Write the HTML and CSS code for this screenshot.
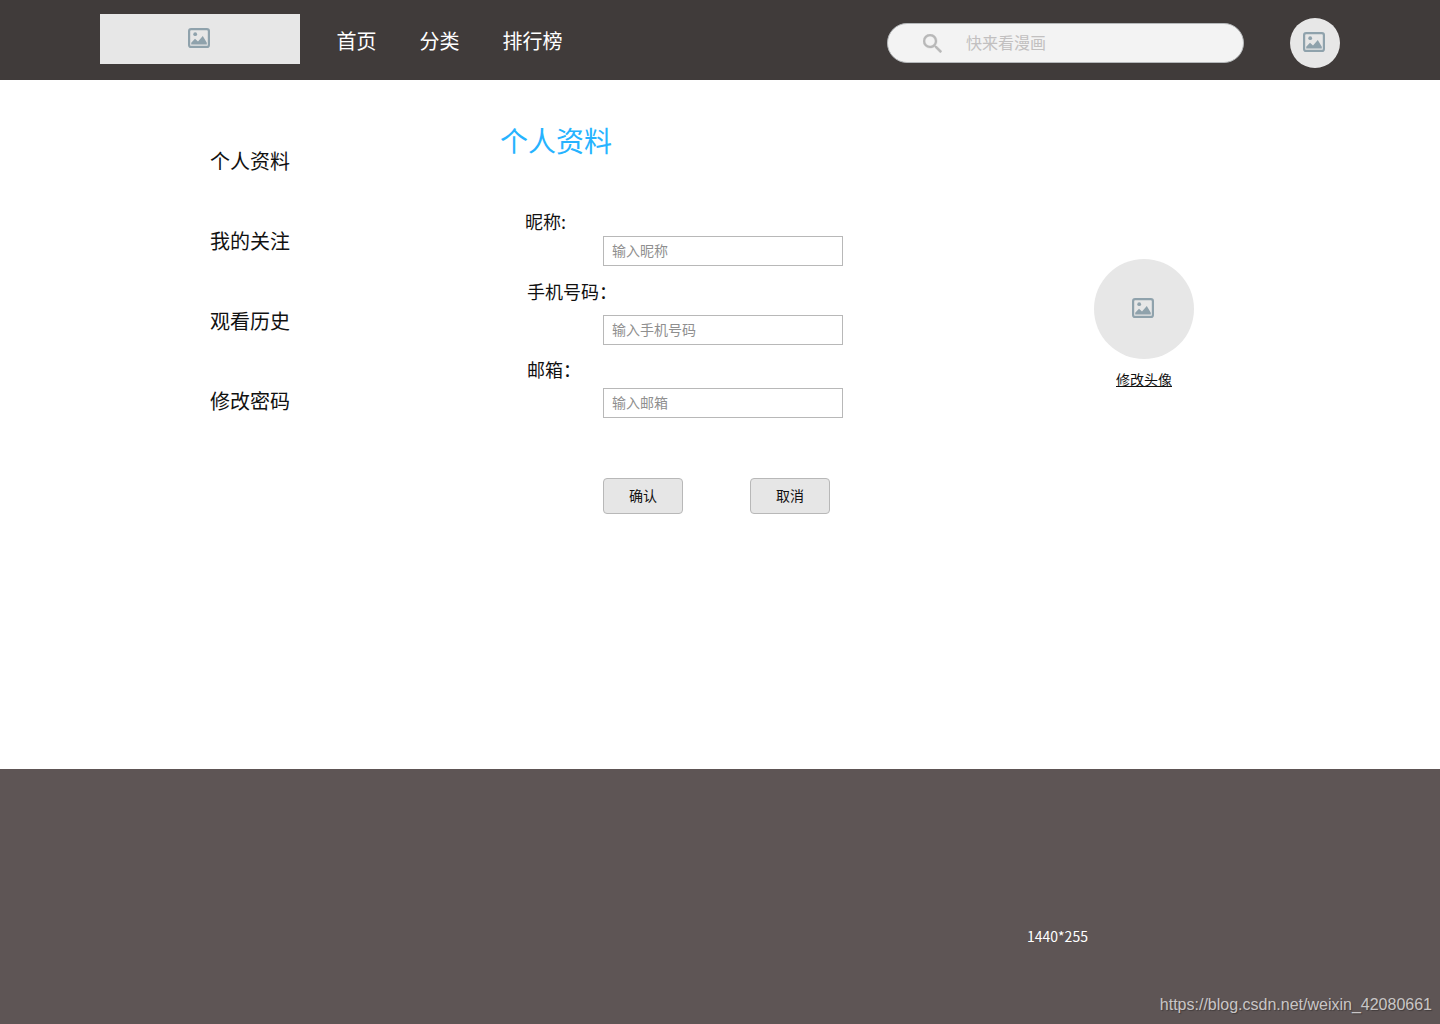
FILE: index.html
```html
<!DOCTYPE html>
<html lang="zh-CN">
<head>
    <meta charset="UTF-8">
    <meta name="viewport" content="width=device-width, initial-scale=1.0">
    <title>个人资料</title>
    <link rel="stylesheet" href="styles.css">
</head>
<body>

    <svg class="symbols" width="0" height="0">
        <symbol id="picture" viewBox="0 0 24 22">
            <rect x="1.1" y="1.1" width="19.8" height="17.8" rx="2" fill="none" stroke="#8fa2ac" stroke-width="2.2"/>
            <circle cx="7.2" cy="6.2" r="1.9" fill="#8fa2ac"/>
            <path d="M3.2 16.6 V14.8 L7 10.8 L10 13.6 L14.8 8 L18.8 14.8 V16.6 Z" fill="#8fa2ac"/>
        </symbol>
    </svg>

    <header class="header">
        <div class="logo"><svg class="picture"><use href="#picture"/></svg></div>
        <nav class="nav">
            <a href="#">首页</a>
            <a href="#">分类</a>
            <a href="#">排行榜</a>
        </nav>
        <div class="search">
            <svg class="search-icon" viewBox="3 3 17.5 17.5">
                <path fill="#b8b8b8" stroke="#b8b8b8" stroke-width="0.3" d="M15.5 14h-.79l-.28-.27A6.47 6.47 0 0 0 16 9.5 6.5 6.5 0 1 0 9.5 16c1.61 0 3.09-.59 4.23-1.57l.27.28v.79l5 4.99L20.49 19l-4.99-5zm-6 0C7.01 14 5 11.99 5 9.5S7.01 5 9.5 5 14 7.01 14 9.5 11.99 14 9.5 14z"/>
            </svg>
            <input type="text" placeholder="快来看漫画">
        </div>
        <div class="avatar"><svg class="picture"><use href="#picture"/></svg></div>
    </header>

    <main class="main">
        <aside class="sidebar">
            <a href="#">个人资料</a>
            <a href="#">我的关注</a>
            <a href="#">观看历史</a>
            <a href="#">修改密码</a>
        </aside>

        <section class="profile">
            <h2>个人资料</h2>
            <form class="profile-form">
                <label class="label-name" for="name">昵称:</label>
                <input type="text" id="name" placeholder="输入昵称">
                <label class="label-phone" for="phone">手机号码：</label>
                <input type="text" id="phone" placeholder="输入手机号码">
                <label class="label-mail" for="mail">邮箱：</label>
                <input type="text" id="mail" placeholder="输入邮箱">
                <div class="buttons">
                    <button type="button">确认</button>
                    <button type="button">取消</button>
                </div>
            </form>
        </section>

        <div class="portrait">
            <div class="portrait-image"><svg class="picture"><use href="#picture"/></svg></div>
            <a href="#">修改头像</a>
        </div>
    </main>

    <footer class="footer">
        <p class="size">1440*255</p>
        <p class="link">https://blog.csdn.net/weixin_42080661</p>
    </footer>

</body>
</html>
```
FILE: styles.css
```css
* {
    box-sizing: border-box;
}

body {
    margin: 0;
    font-family: "Noto Sans CJK SC", sans-serif;
    font-size: 14px;
    color: #111;
    background-color: #fff;
}

a {
    color: inherit;
    text-decoration: none;
}

input, button {
    font-family: inherit;
    font-size: 14px;
    color: #111;
}

.symbols {
    display: none;
}

.picture {
    width: 24px;
    height: 22px;
}

/* Header */
.header {
    display: flex;
    align-items: flex-start;
    height: 80px;
    padding: 0 100px;
    background-color: #403b3a;
}

.logo, .avatar, .portrait-image {
    display: flex;
    justify-content: center;
    align-items: center;
    background-color: #e7e7e7;
}

.logo {
    width: 200px;
    height: 50px;
    margin-top: 14px;
}

.nav {
    display: flex;
    gap: 43px;
    margin-left: 36.5px;
    font-size: 20px;
    line-height: 82px;
    color: #fff;
}

.search {
    display: flex;
    align-items: center;
    width: 357px;
    height: 40px;
    margin: 23px 46px 0 auto;
    padding-left: 35px;
    border: 1px solid #b5b8ba;
    border-radius: 20px;
    background-color: #f3f3f3;
}

.search-icon {
    width: 19px;
    height: 19px;
}

.search input {
    width: 240px;
    margin-left: 24px;
    padding: 0 0 2px;
    border: none;
    outline: none;
    background: none;
    font-size: 16px;
}

.search input::placeholder {
    color: #c2c0c0;
}

.avatar {
    width: 50px;
    height: 50px;
    margin-top: 18px;
    border-radius: 50%;
}

/* Main */
.main {
    display: flex;
    height: 689px;
    padding: 40px 0 0 210px;
}

.sidebar {
    display: flex;
    flex-direction: column;
    width: 290px;
    padding-top: 1px;
    font-size: 20px;
    line-height: 80px;
}

.profile {
    width: 594px;
}

.profile h2 {
    margin: 0;
    font-size: 28px;
    font-weight: normal;
    line-height: 40px;
    color: #26b3ff;
}

.profile-form {
    display: flex;
    flex-direction: column;
    padding: 46px 0 0 25px;
}

.profile-form label {
    font-size: 18px;
    line-height: 30px;
}

.profile-form input {
    width: 240px;
    height: 30px;
    margin-left: 78px;
    padding: 0 8px 2px;
    border: 1px solid #b8b8b8;
    background-color: #fff;
}

.profile-form input::placeholder {
    color: #8f8f8f;
}

.profile-form .label-phone {
    margin: 10px 0 9px 2px;
}

.profile-form .label-mail {
    margin: 9px 0 4px 2px;
}

.buttons {
    display: flex;
    gap: 67px;
    margin: 60px 0 0 78px;
}

.buttons button {
    width: 80px;
    height: 36px;
    padding: 0 0 2px;
    border: 1px solid #b8b8b8;
    border-radius: 4px;
    background-color: #e6e6e6;
}

.portrait {
    display: flex;
    flex-direction: column;
    align-items: center;
    width: 100px;
    padding-top: 139px;
}

.portrait-image {
    width: 100px;
    height: 100px;
    margin-bottom: 10px;
    border-radius: 50%;
}

.portrait a {
    line-height: 20px;
    text-decoration: underline;
}

/* Footer */
.footer {
    display: flex;
    flex-direction: column;
    height: 255px;
    padding: 157px 8px 0 0;
    background-color: #5e5555;
    color: #fff;
}

.footer p {
    margin: 0;
    line-height: 20px;
}

.footer .size {
    margin-left: 1027px;
}

.footer .link {
    align-self: flex-end;
    margin-top: 49px;
    font-family: "Liberation Sans", Arial, sans-serif;
    font-size: 16px;
    color: #c9c6c6;
    text-shadow: 1px 1px 1px rgba(0, 0, 0, 0.3);
}
```
